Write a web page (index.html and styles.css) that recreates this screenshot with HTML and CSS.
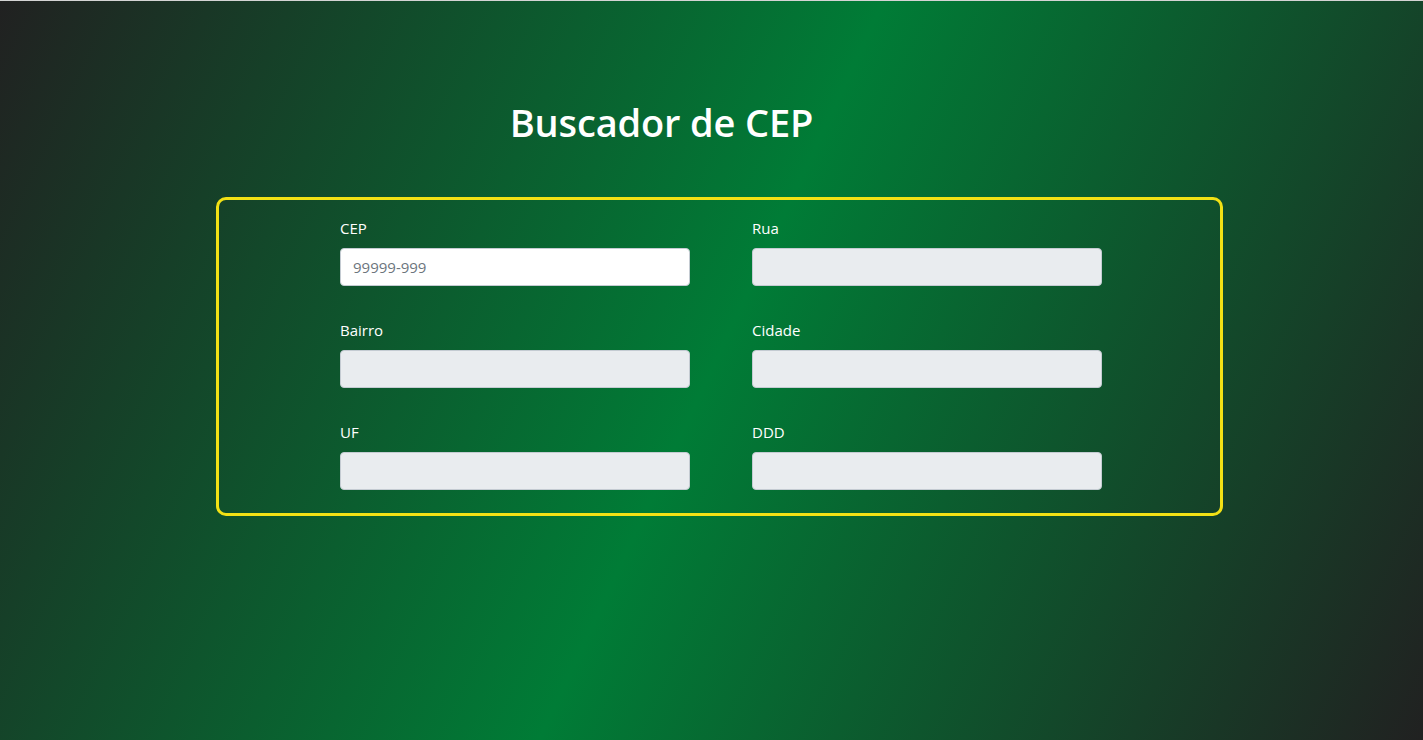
FILE: index.html
```html
<!DOCTYPE html>
<html lang="pt-BR">
<head>
<meta charset="utf-8">
<title>Buscador de CEP</title>
<link rel="stylesheet" href="styles.css">
</head>
<body>
<div class="page">
  <h1 class="title">Buscador de CEP</h1>
  <form class="card">
    <div class="grid">
      <div class="field">
        <label class="label" for="cep">CEP</label>
        <input class="input input-active" id="cep" type="text" placeholder="99999-999">
      </div>
      <div class="field">
        <label class="label" for="rua">Rua</label>
        <input class="input" id="rua" type="text" disabled>
      </div>
      <div class="field">
        <label class="label" for="bairro">Bairro</label>
        <input class="input" id="bairro" type="text" disabled>
      </div>
      <div class="field">
        <label class="label" for="cidade">Cidade</label>
        <input class="input" id="cidade" type="text" disabled>
      </div>
      <div class="field">
        <label class="label" for="uf">UF</label>
        <input class="input" id="uf" type="text" disabled>
      </div>
      <div class="field">
        <label class="label" for="ddd">DDD</label>
        <input class="input" id="ddd" type="text" disabled>
      </div>
    </div>
  </form>
</div>
</body>
</html>
```
FILE: styles.css
```css
html, body {
  margin: 0;
  padding: 0;
  height: 100%;
}
body {
  box-sizing: border-box;
  border-top: 1px solid #d4d4d4;
  background: linear-gradient(115deg, #212121 0%, #007c36 50%, #212121 100%);
  font-family: "Open Sans", "Noto Sans", sans-serif;
  color: #ffffff;
  overflow: hidden;
}
.page {
  width: 1007px;
  margin: 0 auto;
  padding-left: 16px;
}
.title {
  margin: 0;
  padding: 97px 116px 0 0;
  text-align: center;
  font-size: 38px;
  font-weight: 600;
  line-height: 48px;
  height: 48px;
  letter-spacing: -0.15px;
}
.card {
  box-sizing: border-box;
  margin-top: 51px;
  width: 1007px;
  height: 319px;
  border: 3px solid #f2e115;
  border-radius: 10px;
  padding: 16px 0 0 121px;
}
.grid {
  display: grid;
  grid-template-columns: 350px 350px;
  column-gap: 62px;
  row-gap: 32px;
}
.field {
  display: flex;
  flex-direction: column;
}
.label {
  font-size: 15px;
  line-height: 24px;
  margin-bottom: 8px;
}
.input {
  box-sizing: border-box;
  height: 38px;
  width: 350px;
  border: 1px solid #c4cbd2;
  border-radius: 4px;
  background: #e9ecef;
  padding: 0 12px;
  font-family: inherit;
  font-size: 15px;
  color: #212529;
  margin: 0;
}
.input-active {
  background: #ffffff;
}
.input::placeholder {
  color: #6c757d;
}
```
